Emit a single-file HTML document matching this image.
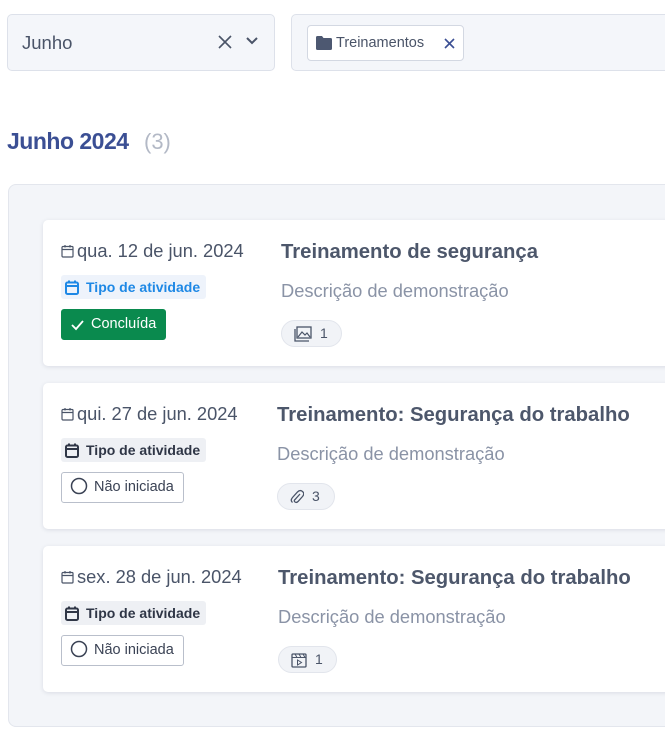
<!DOCTYPE html>
<html><head><meta charset="utf-8"><style>
*{box-sizing:border-box;margin:0;padding:0}
body{width:665px;height:731px;overflow:hidden;background:#fff;font-family:"Liberation Sans",sans-serif;position:relative;color:#4a5468}
.abs{position:absolute}
.sel{top:14px;height:57px;background:#f4f6fa;border:1px solid #dde1ea;border-radius:5px}
.chip{left:307px;top:25px;width:157px;height:36px;background:#fff;border:1px solid #d3d8e2;border-radius:4px;font-size:14.5px;color:#4a5468}
.outer{left:8px;top:184px;width:700px;height:543px;background:#f3f5f9;border:1px solid #e3e6ed;border-radius:8px}
.card{left:43px;width:660px;height:146px;background:#fff;border-radius:5px;box-shadow:0 1px 4px rgba(40,50,80,.12)}
.date{left:18px;top:20px;font-size:18.3px;color:#4a5468;white-space:nowrap}
.date svg{vertical-align:-1px;margin-right:3px}
.tag{left:18px;top:55px;height:24px;padding:0 6px 0 4px;border-radius:3px;font-size:14px;font-weight:bold;line-height:24px;white-space:nowrap}
.tag svg{vertical-align:-3px;margin-right:7px}
.status{left:18px;top:89px;height:31px;border-radius:3px;font-size:14.5px;line-height:29px;padding:0 10px 0 8px;white-space:nowrap}
.status svg{vertical-align:-4px;margin-right:6px}
.title{top:21px;font-size:20.3px;font-weight:bold;color:#4d576b;white-space:nowrap}
.desc{top:60px;font-size:18.3px;color:#8a93a6;white-space:nowrap}
.pill{top:100px;height:27px;border-radius:14px;background:#f1f3f7;border:1px solid #e2e5ec;font-size:14px;line-height:25px;padding:0 12px 0 12px;white-space:nowrap;color:#4a5468}
.pill svg{vertical-align:-4px;margin-right:8px}
</style></head><body>
<div class="abs sel" style="left:7px;width:268px">
 <div class="abs" style="left:14px;top:17px;font-size:18.5px;color:#4a5468">Junho</div>
 <svg class="abs" style="left:209px;top:19px" width="16" height="16" viewBox="0 0 16 16"><path d="M2 2L14 14M14 2L2 14" stroke="#4a5468" stroke-width="1.6"/></svg>
 <svg class="abs" style="left:237px;top:21px" width="14" height="10" viewBox="0 0 14 10"><path d="M2 2L7 7L12 2" stroke="#4a5468" stroke-width="2" fill="none"/></svg>
</div>
<div class="abs sel" style="left:291px;width:400px"></div>
<div class="abs chip">
 <svg class="abs" style="left:8px;top:10px" width="16" height="14" viewBox="0 0 16 14"><path d="M0 1.5Q0 0 1.5 0H6L7.5 2H14.5Q16 2 16 3.5V12.5Q16 14 14.5 14H1.5Q0 14 0 12.5Z" fill="#4d5871"/></svg>
 <div class="abs" style="left:28px;top:9px">Treinamentos</div>
 <svg class="abs" style="left:136px;top:12px" width="11" height="11" viewBox="0 0 11 11"><path d="M1 1L10 10M10 1L1 10" stroke="#3b4f94" stroke-width="1.6"/></svg>
</div>
<div class="abs" style="left:7px;top:128px;font-size:23px;font-weight:bold;color:#3b4f94;letter-spacing:-0.5px">Junho 2024</div>
<div class="abs" style="left:144px;top:129px;font-size:22px;color:#b3b9c6">(3)</div>
<div class="abs outer"></div>

<div class="abs card" style="top:220px">
 <div class="abs date"><svg width="13" height="14" viewBox="0 0 13 14"><rect x="1" y="2.5" width="11" height="10.5" rx="1" fill="none" stroke="#4a5468" stroke-width="1.2"/><path d="M1 5.5H12M4 1V3.5M9 1V3.5" stroke="#4a5468" stroke-width="1.2"/></svg>qua. 12 de jun. 2024</div>
 <div class="abs tag" style="background:#eef3fb;color:#1e88e5"><svg width="14" height="15" viewBox="0 0 14 15"><rect x="1" y="2.5" width="12" height="11.5" rx="1.5" fill="none" stroke="#1e88e5" stroke-width="2"/><path d="M1 6H13M4 0.5V3M10 0.5V3" stroke="#1e88e5" stroke-width="2"/></svg>Tipo de atividade</div>
 <div class="abs status" style="background:#0a8a4e;color:#fff;border:1px solid #0a8a4e;width:105px"><svg width="15" height="15" viewBox="0 0 15 15"><path d="M2 8L6 12L13 4" stroke="#fff" stroke-width="1.8" fill="none"/></svg>Concluída</div>
 <div class="abs title" style="left:238px">Treinamento de segurança</div>
 <div class="abs desc" style="left:238px">Descrição de demonstração</div>
 <div class="abs pill" style="left:238px;width:61px"><svg width="18" height="16" viewBox="0 0 18 16"><rect x="3" y="1" width="14" height="11" fill="none" stroke="#4a5468" stroke-width="1.3"/><path d="M1 3V15H15" stroke="#4a5468" stroke-width="1.3" fill="none"/><path d="M4 11L8 6L11 9L13 7L16 11" stroke="#4a5468" stroke-width="1.2" fill="none"/></svg>1</div>
</div>

<div class="abs card" style="top:383px">
 <div class="abs date"><svg width="13" height="14" viewBox="0 0 13 14"><rect x="1" y="2.5" width="11" height="10.5" rx="1" fill="none" stroke="#4a5468" stroke-width="1.2"/><path d="M1 5.5H12M4 1V3.5M9 1V3.5" stroke="#4a5468" stroke-width="1.2"/></svg>qui. 27 de jun. 2024</div>
 <div class="abs tag" style="background:#eef0f4;color:#2f3646"><svg width="14" height="15" viewBox="0 0 14 15"><rect x="1" y="2.5" width="12" height="11.5" rx="1.5" fill="none" stroke="#2f3646" stroke-width="2"/><path d="M1 6H13M4 0.5V3M10 0.5V3" stroke="#2f3646" stroke-width="2"/></svg>Tipo de atividade</div>
 <div class="abs status" style="background:#fff;color:#3a4254;border:1px solid #b9bfcb;width:123px"><svg width="18" height="18" viewBox="0 0 18 18"><circle cx="9" cy="9" r="7.5" fill="none" stroke="#3a4254" stroke-width="1.5"/></svg>Não iniciada</div>
 <div class="abs title" style="left:234px">Treinamento: Segurança do trabalho</div>
 <div class="abs desc" style="left:234px">Descrição de demonstração</div>
 <div class="abs pill" style="left:234px;width:58px"><svg width="14" height="16" viewBox="0 0 14 16"><path d="M10 5L5 10.5Q3.5 12 5 13Q6.5 14 8 12.5L12.5 7.5Q15 4.5 12.5 2.5Q10 0.5 7.5 3L2.5 8.5Q0 11.5 2.5 13.5" stroke="#4a5468" stroke-width="1.3" fill="none"/></svg>3</div>
</div>

<div class="abs card" style="top:546px">
 <div class="abs date"><svg width="13" height="14" viewBox="0 0 13 14"><rect x="1" y="2.5" width="11" height="10.5" rx="1" fill="none" stroke="#4a5468" stroke-width="1.2"/><path d="M1 5.5H12M4 1V3.5M9 1V3.5" stroke="#4a5468" stroke-width="1.2"/></svg>sex. 28 de jun. 2024</div>
 <div class="abs tag" style="background:#eef0f4;color:#2f3646"><svg width="14" height="15" viewBox="0 0 14 15"><rect x="1" y="2.5" width="12" height="11.5" rx="1.5" fill="none" stroke="#2f3646" stroke-width="2"/><path d="M1 6H13M4 0.5V3M10 0.5V3" stroke="#2f3646" stroke-width="2"/></svg>Tipo de atividade</div>
 <div class="abs status" style="background:#fff;color:#3a4254;border:1px solid #b9bfcb;width:123px"><svg width="18" height="18" viewBox="0 0 18 18"><circle cx="9" cy="9" r="7.5" fill="none" stroke="#3a4254" stroke-width="1.5"/></svg>Não iniciada</div>
 <div class="abs title" style="left:235px">Treinamento: Segurança do trabalho</div>
 <div class="abs desc" style="left:235px">Descrição de demonstração</div>
 <div class="abs pill" style="left:235px;width:59px"><svg width="16" height="16" viewBox="0 0 16 16"><rect x="1" y="2" width="14" height="13" rx="1" fill="none" stroke="#4a5468" stroke-width="1.3"/><path d="M1 5.5H15M4 2L6 5.5M8 2L10 5.5M12 2L14 5.5" stroke="#4a5468" stroke-width="1"/><path d="M6.5 8V13L10.5 10.5Z" fill="none" stroke="#4a5468" stroke-width="1"/></svg>1</div>
</div>
</body></html>
